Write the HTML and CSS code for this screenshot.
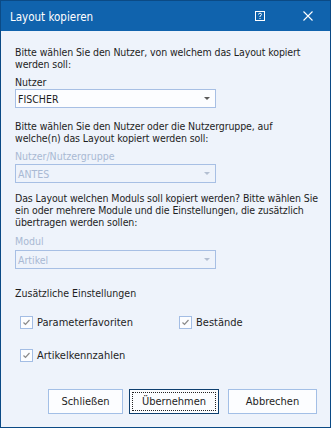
FILE: index.html
```html
<!DOCTYPE html>
<html lang="de">
<head>
<meta charset="utf-8">
<title>Layout kopieren</title>
<link rel="stylesheet" href="styles.css">
</head>
<body>
<div class="window">
  <div class="titlebar">
    <span class="title">Layout kopieren</span>
    <span class="tb-btn help">
      <svg width="10" height="10" viewBox="0 0 10 10"><rect x="0.5" y="0.5" width="9" height="9" fill="none" stroke="#fff" stroke-width="1"/><path d="M3.5 3.5 Q3.5 2.2 5 2.2 Q6.5 2.2 6.5 3.5 Q6.5 4.4 5 5 L5 6" fill="none" stroke="#fff" stroke-width="1"/><rect x="4.5" y="7" width="1" height="1" fill="#fff"/></svg>
    </span>
    <span class="tb-btn close">
      <svg width="10" height="10" viewBox="0 0 10 10"><path d="M0.5 0.5 L9.5 9.5 M9.5 0.5 L0.5 9.5" stroke="#fff" stroke-width="1.1"/></svg>
    </span>
  </div>
  <div class="content">
    <p class="text t1">Bitte wählen Sie den Nutzer, von welchem das Layout kopiert werden soll:</p>
    <div class="label l1">Nutzer</div>
    <div class="combo c1"><span class="value">FISCHER</span><span class="arrow"></span></div>

    <p class="text t2">Bitte wählen Sie den Nutzer oder die Nutzergruppe, auf welche(n) das Layout kopiert werden soll:</p>
    <div class="label disabled l2">Nutzer/Nutzergruppe</div>
    <div class="combo disabled c2"><span class="value">ANTES</span><span class="arrow"></span></div>

    <p class="text t3">Das Layout welchen Moduls soll kopiert werden? Bitte wählen Sie ein oder mehrere Module und die Einstellungen, die zusätzlich übertragen werden sollen:</p>
    <div class="label disabled l3">Modul</div>
    <div class="combo disabled c3"><span class="value">Artikel</span><span class="arrow"></span></div>

    <div class="section">Zusätzliche Einstellungen</div>
    <div class="checks">
      <label class="check"><span class="box"><svg width="11" height="11" viewBox="0 0 11 11"><path d="M2.5 5.5 L4.5 7.5 L8.5 3" fill="none" stroke="#8a8a8a" stroke-width="1.2"/></svg></span>Parameterfavoriten</label>
      <label class="check"><span class="box"><svg width="11" height="11" viewBox="0 0 11 11"><path d="M2.5 5.5 L4.5 7.5 L8.5 3" fill="none" stroke="#8a8a8a" stroke-width="1.2"/></svg></span>Bestände</label>
      <label class="check row2"><span class="box"><svg width="11" height="11" viewBox="0 0 11 11"><path d="M2.5 5.5 L4.5 7.5 L8.5 3" fill="none" stroke="#8a8a8a" stroke-width="1.2"/></svg></span>Artikelkennzahlen</label>
    </div>

    <div class="buttons">
      <button class="btn b1">Schließen</button>
      <button class="btn b2 default"><span class="focus">Übernehmen</span></button>
      <button class="btn b3">Abbrechen</button>
    </div>
  </div>
</div>
</body>
</html>
```

FILE: styles.css
```css
* { box-sizing: border-box; }
html, body { margin: 0; padding: 0; }
body {
  width: 331px;
  height: 428px;
  font-family: "DejaVu Sans Condensed", "DejaVu Sans", sans-serif;
  font-stretch: condensed;
  font-size: 10.5px;
  color: #1e1e1e;
}
.window {
  width: 331px;
  height: 428px;
  border: 1px solid #0b4a85;
  background: #eef3fb;
  display: flex;
  flex-direction: column;
}
.titlebar {
  height: 30px;
  flex: 0 0 30px;
  background: #1063ad;
  color: #fff;
  display: flex;
  align-items: center;
  padding-left: 9px;
}
.title {
  font-size: 11.5px;
  flex: 1;
  padding-top: 1px;
}
.tb-btn { display: flex; width: 10px; height: 10px; }
.help { margin-right: 38px; }
.close { margin-right: 17px; }

.content {
  padding: 15px 5px 0 14px;
  display: flex;
  flex-direction: column;
  flex: 1;
}
.text { margin: 0; line-height: 12px; letter-spacing: -0.1px; }
.t2 { max-width: 296px; }
.label { line-height: 12px; }
.disabled { color: #a9b9d3; }

.l1 { margin-top: 6px; }
.c1 { margin-top: 1px; }
.t2 { margin-top: 12px; }
.l2 { margin-top: 6px; }
.c2 { margin-top: 2px; }
.t3 { margin-top: 9px; }
.l3 { margin-top: 7px; }
.c3 { margin-top: 3px; }

.combo {
  width: 201px;
  height: 19px;
  border: 1px solid #a7bfe4;
  background: #fcfdff;
  display: flex;
  align-items: center;
  padding-left: 2px;
  padding-right: 5px;
  line-height: 12px;
}
.combo.disabled { background: #eef3fb; }
.combo .value { flex: 1; }
.arrow {
  width: 0; height: 0;
  border-left: 3px solid transparent;
  border-right: 3px solid transparent;
  border-top: 3px solid #5a5a5a;
}
.combo.disabled .arrow { border-top-color: #b3bfd2; }

.section { margin-top: 18px; line-height: 12px; }

.checks {
  display: grid;
  grid-template-columns: 159px auto;
  row-gap: 20px;
  margin-top: 17px;
  padding-left: 5px;
}
.check {
  display: flex;
  align-items: center;
  height: 13px;
  line-height: 13px;
  font-size: 11px;
}
.row2 { grid-column: 1; }
.box {
  width: 13px; height: 13px;
  border: 1px solid #a3bde4;
  background: #fcfdff;
  margin-right: 4px;
  display: flex;
  align-items: center;
  justify-content: center;
}

.buttons {
  display: flex;
  margin-top: auto;
  margin-bottom: 13px;
  padding-left: 33px;
}
.btn {
  height: 25px;
  border: 1px solid #a3bfe6;
  background: #fcfdff;
  font-family: inherit;
  font-stretch: condensed;
  font-size: 11px;
  color: #1e1e1e;
  padding: 0;
  display: flex;
  align-items: center;
  justify-content: center;
}
.b1 { width: 75px; }
.b2 { width: 90px; margin-left: 6px; border-color: #0e3f6f; padding: 2px; }
.b3 { width: 89px; margin-left: 9px; }
.focus {
  display: flex;
  align-items: center;
  justify-content: center;
  width: 100%;
  height: 100%;
  border: 1px dotted #222;
}
```
